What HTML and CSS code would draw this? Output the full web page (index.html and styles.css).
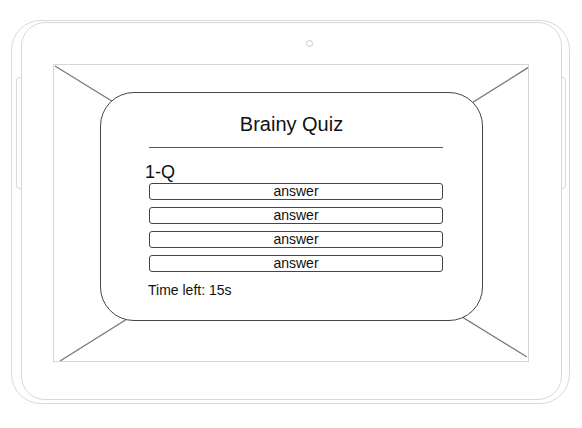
FILE: index.html
```html
<!DOCTYPE html>
<html lang="en">
<head>
<meta charset="utf-8">
<title>Brainy Quiz</title>
<link rel="stylesheet" href="styles.css">
</head>
<body>
<div class="tablet">
  <div class="bezel">
    <div class="camera"></div>
    <div class="screen">
      <svg class="x-lines" width="474" height="296" viewBox="0 0 474 296">
        <line x1="1" y1="1" x2="473" y2="292"/>
        <line x1="475" y1="2" x2="6" y2="296"/>
      </svg>
      <div class="card">
        <h1 class="title">Brainy Quiz</h1>
        <hr class="rule">
        <div class="question">1-Q</div>
        <div class="answers">
          <button class="answer">answer</button>
          <button class="answer">answer</button>
          <button class="answer">answer</button>
          <button class="answer">answer</button>
        </div>
        <div class="timer">Time left: 15s</div>
      </div>
    </div>
  </div>
</div>
</body>
</html>
```

FILE: styles.css
```css
* { box-sizing: border-box; }
html, body { margin: 0; padding: 0; background: #fff; }
body {
  font-family: "Liberation Sans", Arial, sans-serif;
  color: #111;
}
.tablet {
  position: relative;
  margin: 20px 0 0 11px;
  width: 559px;
  height: 384px;
  border: 1px solid #d9d9d9;
  border-radius: 30px;
  padding: 1px 7px 3px 9px;
}
.tablet::before,
.tablet::after {
  content: "";
  position: absolute;
  top: 56px;
  height: 110px;
  border: 1px solid #dadada;
}
.tablet::before {
  left: 4px;
  width: 6px;
  border-right: none;
  border-radius: 4px 0 0 4px;
}
.tablet::after {
  right: 3px;
  width: 6px;
  border-left: none;
  border-radius: 0 4px 4px 0;
}
.bezel {
  position: relative;
  z-index: 1;
  background: #fff;
  width: 541px;
  height: 378px;
  border: 1px solid #d9d9d9;
  border-radius: 24px;
  display: flex;
  flex-direction: column;
  align-items: flex-start;
}
.camera {
  margin: 17px 0 0 284px;
  width: 7px;
  height: 7px;
  border: 1px solid #c8c8c8;
  border-radius: 50%;
}
.screen {
  position: relative;
  margin: 17px 0 0 31px;
  width: 476px;
  height: 298px;
  border: 1px solid #d6d6d6;
  padding: 27px 0 0 46px;
}
.x-lines {
  position: absolute;
  left: 0;
  top: 0;
  display: block;
}
.x-lines line {
  stroke: #7a7a7a;
  stroke-width: 1.3;
}
.card {
  position: relative;
  width: 383px;
  height: 229px;
  border: 1px solid #444;
  border-radius: 34px;
  background: #fff;
  padding-top: 19px;
}
.title {
  margin: 0;
  font-size: 20px;
  font-weight: normal;
  line-height: 24px;
  text-align: center;
}
.rule {
  margin: 11px 0 0 48px;
  width: 294px;
  height: 0;
  border: 0;
  border-top: 1px solid #555;
}
.question {
  margin-top: 14px;
  padding-left: 44px;
  font-size: 18px;
  line-height: 20px;
}
.answers {
  margin: 1px 0 0 48px;
  width: 294px;
  display: flex;
  flex-direction: column;
  gap: 7px;
}
.answer {
  display: block;
  width: 100%;
  height: 17px;
  padding: 0;
  margin: 0;
  border: 1px solid #444;
  border-radius: 3px;
  background: #fff;
  color: #111;
  font-family: "Liberation Sans", Arial, sans-serif;
  font-size: 14px;
  line-height: 15px;
  text-align: center;
}
.timer {
  margin-top: 10px;
  padding-left: 47px;
  font-size: 14px;
  line-height: 16px;
}
```
